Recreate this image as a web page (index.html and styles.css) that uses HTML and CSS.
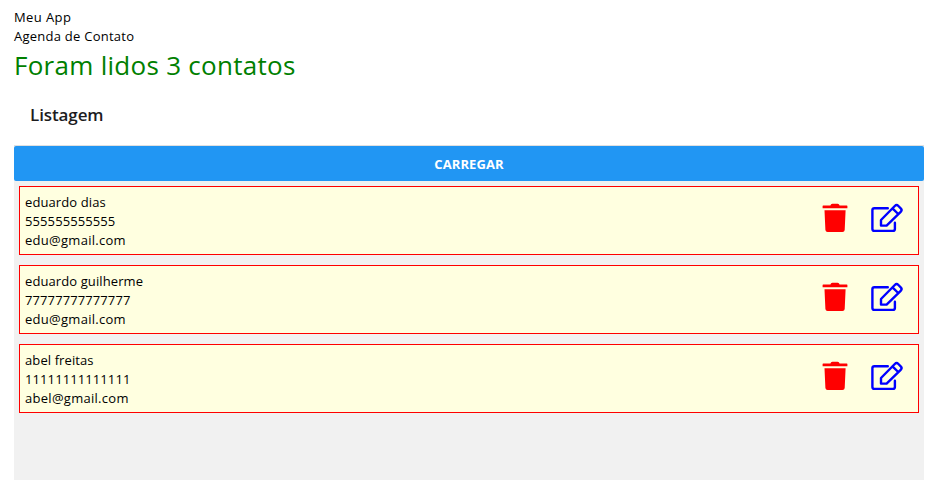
FILE: index.html
```html
<!DOCTYPE html>
<html lang="pt-BR">
<head>
<meta charset="utf-8">
<title>Meu App</title>
<link rel="stylesheet" href="styles.css">
</head>
<body>
<svg width="0" height="0" class="defs" aria-hidden="true">
  <symbol id="trash" viewBox="0 0 26 30">
    <path d="M1.2 2.4H8.4Q8.8.8 10.4.8H15.6Q17.2.8 17.6 2.4H24.8Q25.4 2.4 25.4 3V5.3H.6V3Q.6 2.4 1.2 2.4ZM2.5 7.3H23.6L22.7 27Q22.5 29.1 20.5 29.1H5.6Q3.6 29.1 3.4 27Z" fill="currentColor"/>
  </symbol>
  <symbol id="edit" viewBox="0 0 34 30">
    <g fill="none" stroke="currentColor" stroke-width="2.4" stroke-linejoin="round" stroke-linecap="round">
      <path d="M17.8 5.2H4.3Q2.4 5.2 2.4 7.1V26Q2.4 27.9 4.3 27.9H23Q24.9 27.9 24.9 26V19.8"/>
      <path d="M11 22.6V17L24.8 3Q26.6 1.2 28.4 3L30.7 5.3Q32.5 7.1 30.7 8.9L16.6 22.6ZM22.5 5.4L28.2 11"/>
    </g>
  </symbol>
</svg>
<main class="app">
  <div class="line name">Meu App</div>
  <div class="line subtitle">Agenda de Contato</div>
  <div class="count">Foram lidos 3 contatos</div>
  <h1 class="heading">Listagem</h1>
  <section class="panel">
    <button class="load">CARREGAR</button>
    <article class="card">
      <div class="info"><div>eduardo dias</div><div>555555555555</div><div class="email">edu@gmail.com</div></div>
      <div class="actions"><svg class="trash"><use href="#trash"/></svg><svg class="edit"><use href="#edit"/></svg></div>
    </article>
    <article class="card">
      <div class="info"><div>eduardo guilherme</div><div>77777777777777</div><div class="email">edu@gmail.com</div></div>
      <div class="actions"><svg class="trash"><use href="#trash"/></svg><svg class="edit"><use href="#edit"/></svg></div>
    </article>
    <article class="card">
      <div class="info"><div>abel freitas</div><div>11111111111111</div><div class="email">abel@gmail.com</div></div>
      <div class="actions"><svg class="trash"><use href="#trash"/></svg><svg class="edit"><use href="#edit"/></svg></div>
    </article>
  </section>
</main>
</body>
</html>
```
FILE: styles.css
```css
* { box-sizing: border-box; }
html, body { height: 100%; margin: 0; overflow: hidden; }
body { background: #fff; color: #000; font: 13px/19px "Segoe UI", "Open Sans", sans-serif; }
.defs { display: none; }
.app { height: 480px; display: flex; flex-direction: column; padding: 8px 25px 0 14px; }
.line { height: 19px; }
.name { letter-spacing: .4px; }
.subtitle { letter-spacing: .25px; }
.count { height: 37px; line-height: 38px; font-size: 26px; letter-spacing: .28px; color: #008000; }
.heading { margin: 0; height: 62px; padding: 21px 16px; font-size: 17px; line-height: 22px; font-weight: 600; letter-spacing: -.1px; color: #1c1c1e; }
.panel { flex: 1; background: #f1f1f1; border-top: 1px solid #e0e0e0; }
.load { display: block; width: 100%; height: 35px; border: 0; border-radius: 2px; background: #2196f3; color: #fff; font: 700 13px/36px "Segoe UI", "Open Sans", sans-serif; letter-spacing: .1px; padding: 0; }
.card { display: flex; justify-content: space-between; height: 69px; margin: 5px 5px 10px; padding: 6px 5px 4px; border: 1px solid #f00; background: #ffffe0; }
.info { letter-spacing: .1px; }
.email { letter-spacing: .28px; }
.actions { display: flex; gap: 22px; padding: 10px 9px 0 0; }
.actions svg { display: block; height: 30px; }
.trash { width: 26px; color: #f00; }
.edit { width: 34px; color: #00f; }
```
